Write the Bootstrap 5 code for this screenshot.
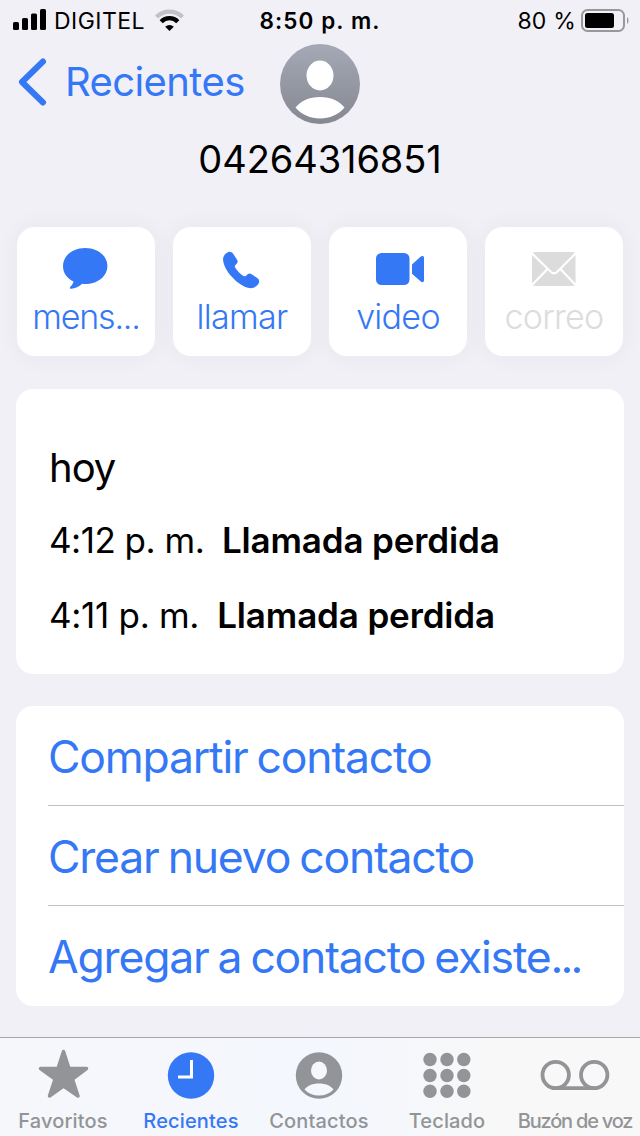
<!DOCTYPE html>
<html lang="es">
<head>
<meta charset="utf-8">
<meta name="viewport" content="width=device-width, initial-scale=1">
<title>Recientes</title>
<link href="https://cdn.jsdelivr.net/npm/bootstrap@5.3.0/dist/css/bootstrap.min.css" rel="stylesheet">
<style>
  :root { --ios-blue: #3478f6; --ios-gray: #929497; }
  body { font-family: Inter, "Liberation Sans", sans-serif; background: #f1f0f6; color: #000; font-size: 23px; }
  svg { display: block; flex: none; overflow: visible; }
  .screen { width: 640px; height: 1136px; }
  .text-ios { color: var(--ios-blue); }
  .status { height: 42px; line-height: 42px; padding: 0 11px 0 13px; white-space: pre; }
  .carrier { font-size: 23px; margin-left: 8px; letter-spacing: .45px; }
  .wifi { margin-left: 9px; }
  .charge { font-size: 23px; letter-spacing: .2px; }
  .battery { margin-left: 5px; }
  .clock { font-size: 22.5px; font-weight: 600; letter-spacing: 1.1px; }
  .header { height: 80px; margin-top: 2px; padding: 0 18px; }
  .back { font-size: 40px; line-height: 76px; padding-bottom: 4px; }
  .back span { margin-left: 17px; letter-spacing: -.6px; }
  .number { font-size: 38px; line-height: 70px; letter-spacing: -.1px; }
  .actions { gap: 18px; padding: 33px 17px 0; }
  .action { height: 129px; border-radius: 18px; padding-top: 20px; box-shadow: 0 0 24px rgba(60,60,80,.05); color: var(--ios-blue); text-decoration: none; }
  .action span { font-size: 34px; font-weight: 350; line-height: 40px; margin-top: 6px; letter-spacing: -.7px; }
  .action .clipped { letter-spacing: -1.2px; }
  .action.off { color: #dcdcdc; }
  .panel { margin: 33px 16px 0; border-radius: 17px; background: #fff; overflow: hidden; }
  .calls { height: 285px; padding: 43px 32px 0 33px; white-space: pre; }
  .day { font-size: 40px; line-height: 71px; letter-spacing: -1px; }
  .call { font-size: 35px; line-height: 75px; letter-spacing: -.5px; }
  .call.loose { letter-spacing: -.3px; }
  .call b { font-weight: 600; letter-spacing: -.15px; margin-left: -1px; }
  .links { margin-top: 32px; padding-left: 32px; }
  .links a { display: block; height: 100px; line-height: 102px; font-size: 44.5px; letter-spacing: -1.200px; word-spacing: -2.300px; color: var(--ios-blue); text-decoration: none; white-space: nowrap; }
  .links a:not(:last-child) { border-bottom: 1px solid #c2c2c5; }
  .links .dots { letter-spacing: -2.900px; }
  .tabs { height: 99px; border-top: 1px solid #a6a6aa; background: linear-gradient(90deg, #f6f7fb 0%, #f4f7fd 50%, #f8f8f8 80%); padding: 12px 1px 0 0; }
  .tabs a { flex: 0 0 128px; color: var(--ios-gray); text-decoration: none; font-size: 20px; font-weight: 500; white-space: nowrap; margin-left: -1px; margin-right: 1px; }
  .tabs a.active { color: var(--ios-blue); }
  .tabs span { line-height: 31px; margin-top: 8px; letter-spacing: .15px; }
  .tabs .tight { letter-spacing: -1.200px; }
</style>
</head>
<body>
<div class="screen d-flex flex-column overflow-hidden">
  <div class="status d-flex align-items-center position-relative">
    <svg width="33" height="22" viewBox="0 0 33 22"><rect y="12" width="6" height="8" rx="1.5"/><rect x="9" y="8" width="6" height="12" rx="1.5"/><rect x="18" y="3.500" width="6" height="16.500" rx="1.5"/><rect x="27" y="-1" width="6" height="21" rx="1.5"/></svg>
    <span class="carrier">DIGITEL</span>
    <svg class="wifi" width="34" height="26" viewBox="0 0 34 26"><path d="M2.500 9a18.500 18.500 0 0 1 26 0" fill="none" stroke="#c2c2c6" stroke-width="4.200"/><path d="M7.200 13.700a11.500 11.500 0 0 1 16.600 0" fill="none" stroke="#000" stroke-width="4.400"/><path d="M11.200 18.700a6.300 6.300 0 0 1 8.600 0l-4.300 4.300z"/></svg>
    <span class="clock position-absolute start-50 translate-middle-x">8:50 p. m.</span>
    <span class="charge ms-auto">80 %</span>
    <svg class="battery" width="48" height="24" viewBox="0 0 48 24"><rect x="1" y="1" width="42" height="21" rx="5.500" fill="none" stroke="#98989b" stroke-width="2"/><rect x="4" y="4" width="29" height="15" rx="2.500"/><path d="M46 8c2 1.500 2 5.500 0 7z" fill="#98989b"/></svg>
  </div>
  <div class="header d-flex align-items-center position-relative">
    <a class="back d-flex align-items-center text-ios text-decoration-none" href="#"><svg width="30" height="48" viewBox="0 0 30 48"><path d="M25 3.500 4 24l21 20.500" fill="none" stroke="currentColor" stroke-width="6" stroke-linecap="round" stroke-linejoin="round"/></svg><span>Recientes</span></a>
    <svg class="position-absolute start-50 translate-middle-x" width="80" height="80" viewBox="0 0 80 80"><defs><linearGradient id="av" x2="0" y2="1"><stop stop-color="#a5a9b6"/><stop offset="1" stop-color="#858891"/></linearGradient></defs><circle cx="40" cy="40" r="40" fill="url(#av)"/><ellipse cx="40" cy="31.500" rx="13.500" ry="15" fill="#fff"/><path d="M15.500 63.500C21 57 29 53 40 53s19 4 24.500 10.500C58 71 49.500 74.500 40 74.500S22 71 15.500 63.500z" fill="#fff"/></svg>
  </div>
  <div class="number text-center">04264316851</div>
  <div class="actions d-flex">
    <a class="action flex-fill w-25 bg-white d-flex flex-column align-items-center" href="#"><svg width="60" height="44" viewBox="0 0 60 44"><path transform="translate(-1 0)" d="M30.200 1C42.500 1 52.400 8.500 52.400 19S42.500 37 30.200 37q-1.500 0-3-.2c-3.200 2.700-7 4.700-11 5-1.500 0-1.700-1-.8-2 1.600-1.600 2.700-3.200 3.100-5.300C12 31.500 8 26 8 19 8 8.500 17.900 1 30.200 1z" fill="currentColor"/></svg><span class="clipped">mens...</span></a>
    <a class="action flex-fill w-25 bg-white d-flex flex-column align-items-center" href="#"><svg width="60" height="44" viewBox="0 0 60 44"><path transform="translate(2.600 .3) scale(.93)" d="M12.500 6.500C15 4 18.200 4.300 20 7l4 6.200c1.300 2 .8 3.300-.5 4.700l-1.300 1.500c-.7.8-.6 1.600 0 2.600 2.200 3.500 5.200 6.500 8.800 8.800 1 .6 1.700.6 2.500 0l1.700-1.500c1.400-1.200 2.800-1.600 4.600-.4l6 4.200c2.600 1.800 2.900 4.500.8 7-2.200 2.700-5.500 4.300-9.600 3.700-6-1-12.500-5.500-18-11.500C13.500 26.500 10 20 9.200 14.500 8.800 11 9.700 8.700 12.500 6.500z" fill="currentColor"/></svg><span>llamar</span></a>
    <a class="action flex-fill w-25 bg-white d-flex flex-column align-items-center" href="#"><svg width="60" height="44" viewBox="0 0 60 44"><rect x="8" y="6" width="33.500" height="32" rx="5.500" fill="currentColor"/><path d="M44 17.500 52.500 9.800c1.700-1.400 3.500-1 3.500 1v22.500c0 2-1.800 2.500-3.500 1L44 26.800z" fill="currentColor"/></svg><span>video</span></a>
    <a class="action off flex-fill w-25 bg-white d-flex flex-column align-items-center" href="#"><svg width="60" height="44" viewBox="0 0 60 44"><rect x="8" y="5" width="43.500" height="34" rx="3" fill="currentColor"/><path d="M7.500 6 27 25q3 2.500 6 0L52 6M7.500 38.500 23.500 22M52 38.500 36.500 22" fill="none" stroke="#fff" stroke-width="2.200"/></svg><span>correo</span></a>
  </div>
  <div class="panel calls"><div class="day">hoy</div><div class="call"><span>4:12 p. m.</span>  <b>Llamada perdida</b></div><div class="call loose"><span>4:11 p. m.</span>  <b>Llamada perdida</b></div></div>
  <div class="panel links"><a href="#">Compartir contacto</a><a href="#">Crear nuevo contacto</a><a href="#">Agregar a contacto existe<span class="dots">...</span></a></div>
  <nav class="tabs d-flex mt-auto">
    <a class="d-flex flex-column align-items-center" href="#"><svg width="60" height="48" viewBox="0 0 60 48"><path d="M30.500 1.500 36 18.500h17.500L39.500 29.200 45 46 30.500 36 16.500 46 22 29.200 7.500 18.500h17.500z" fill="currentColor" stroke="currentColor" stroke-width="3.500" stroke-linejoin="round"/></svg><span>Favoritos</span></a>
    <a class="active d-flex flex-column align-items-center" href="#"><svg width="60" height="48" viewBox="0 0 60 48"><circle cx="30" cy="25.500" r="23.200" fill="currentColor"/><path d="M30.500 10v17H17" fill="none" stroke="#fff" stroke-width="3"/></svg><span>Recientes</span></a>
    <a class="d-flex flex-column align-items-center" href="#"><svg width="60" height="48" viewBox="0 0 60 48"><circle cx="30" cy="25.500" r="23.200" fill="currentColor"/><ellipse cx="30" cy="20.500" rx="8" ry="9" fill="#f5f7fc"/><path d="M15.500 39.500C18.500 35.500 23.500 33.500 30 33.500s11.500 2 14.500 6C40.500 43.500 36 45.500 30 45.500s-10.500-2-14.500-6z" fill="#f5f7fc"/></svg><span>Contactos</span></a>
    <a class="d-flex flex-column align-items-center" href="#"><svg width="60" height="48" viewBox="0 0 60 48"><g fill="currentColor"><circle cx="13" cy="9.500" r="6.700"/><circle cx="30" cy="9.500" r="6.700"/><circle cx="46.800" cy="9.500" r="6.700"/><circle cx="13" cy="25.500" r="6.700"/><circle cx="30" cy="25.500" r="6.700"/><circle cx="46.800" cy="25.500" r="6.700"/><circle cx="13" cy="41.300" r="6.700"/><circle cx="30" cy="41.300" r="6.700"/><circle cx="46.800" cy="41.300" r="6.700"/></g></svg><span>Teclado</span></a>
    <a class="d-flex flex-column align-items-center" href="#"><svg width="70" height="48" viewBox="0 0 70 48"><g fill="none" stroke="currentColor" stroke-width="3.800"><circle cx="15.700" cy="25" r="13.200"/><circle cx="54.200" cy="25" r="13.200"/><path d="M15.700 38.200h38.500"/></g></svg><span class="tight">Buzón de voz</span></a>
  </nav>
</div>
<script src="https://cdn.jsdelivr.net/npm/bootstrap@5.3.0/dist/js/bootstrap.bundle.min.js"></script>
</body>
</html>
